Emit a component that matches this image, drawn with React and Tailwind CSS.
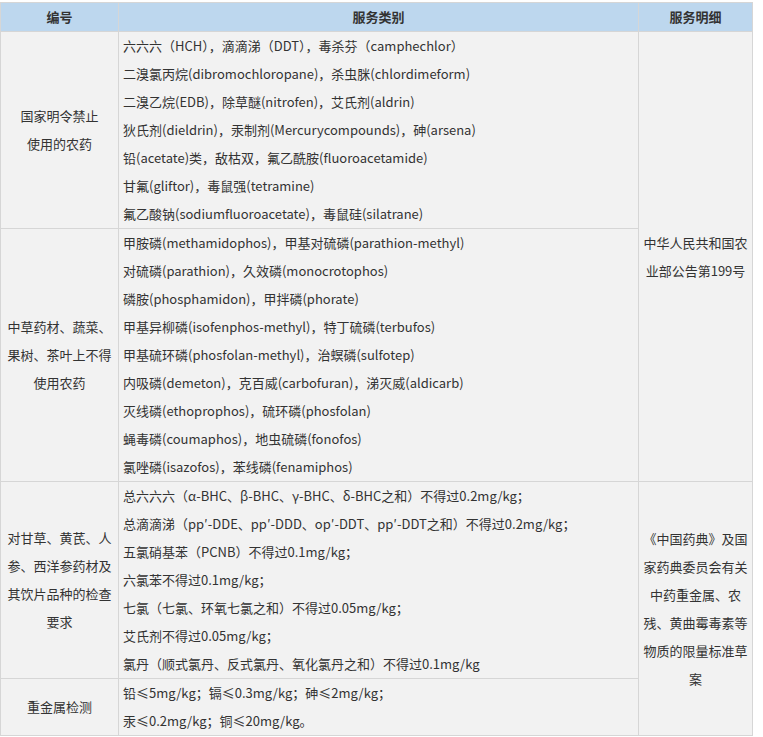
const rows = [
  {
    name: ['国家明令禁止', '使用的农药'],
    lines: [
      '六六六（HCH），滴滴涕（DDT），毒杀芬（camphechlor）',
      '二溴氯丙烷(dibromochloropane)，杀虫脒(chlordimeform)',
      '二溴乙烷(EDB)，除草醚(nitrofen)，艾氏剂(aldrin)',
      '狄氏剂(dieldrin)，汞制剂(Mercurycompounds)，砷(arsena)',
      '铅(acetate)类，敌枯双，氟乙酰胺(fluoroacetamide)',
      '甘氟(gliftor)，毒鼠强(tetramine)',
      '氟乙酸钠(sodiumfluoroacetate)，毒鼠硅(silatrane)',
    ],
    detail: '中华人民共和国农业部公告第199号',
    span: 2,
  },
  {
    name: ['中草药材、蔬菜、', '果树、茶叶上不得', '使用农药'],
    lines: [
      '甲胺磷(methamidophos)，甲基对硫磷(parathion-methyl)',
      '对硫磷(parathion)，久效磷(monocrotophos)',
      '磷胺(phosphamidon)，甲拌磷(phorate)',
      '甲基异柳磷(isofenphos-methyl)，特丁硫磷(terbufos)',
      '甲基硫环磷(phosfolan-methyl)，治螟磷(sulfotep)',
      '内吸磷(demeton)，克百威(carbofuran)，涕灭威(aldicarb)',
      '灭线磷(ethoprophos)，硫环磷(phosfolan)',
      '蝇毒磷(coumaphos)，地虫硫磷(fonofos)',
      '氯唑磷(isazofos)，苯线磷(fenamiphos)',
    ],
  },
  {
    name: ['对甘草、黄芪、人', '参、西洋参药材及', '其饮片品种的检查', '要求'],
    lines: [
      '总六六六（α-BHC、β-BHC、γ-BHC、δ-BHC之和）不得过0.2mg/kg；',
      '总滴滴涕（pp′-DDE、pp′-DDD、op′-DDT、pp′-DDT之和）不得过0.2mg/kg；',
      '五氯硝基苯（PCNB）不得过0.1mg/kg；',
      '六氯苯不得过0.1mg/kg；',
      '七氯（七氯、环氧七氯之和）不得过0.05mg/kg；',
      '艾氏剂不得过0.05mg/kg；',
      '氯丹（顺式氯丹、反式氯丹、氧化氯丹之和）不得过0.1mg/kg',
    ],
    detail: '《中国药典》及国家药典委员会有关中药重金属、农残、黄曲霉毒素等物质的限量标准草案',
    span: 2,
  },
  {
    name: ['重金属检测'],
    lines: ['铅≤5mg/kg；镉≤0.3mg/kg；砷≤2mg/kg；', '汞≤0.2mg/kg；铜≤20mg/kg。'],
  },
];

const cell = 'border border-[#d6d6d6] align-middle';

export default function App() {
  return (
    <div className="w-[763px] h-[737px] bg-white pt-[2px] text-[13px] leading-[28px] text-[#333]" style={{ fontFamily: '"Microsoft YaHei", "Noto Sans CJK SC", sans-serif' }}>
      <table className="w-[752px] border-collapse table-fixed bg-[#f2f2f2]">
        <colgroup>
          <col className="w-[118px]" />
          <col className="w-[520px]" />
          <col className="w-[114px]" />
        </colgroup>
        <thead>
          <tr className="h-[29px] bg-[#bdd7ee] font-bold text-[#333]">
            <th className={cell}>编号</th>
            <th className={cell}>服务类别</th>
            <th className={cell}>服务明细</th>
          </tr>
        </thead>
        <tbody>
          {rows.map((r) => (
            <tr key={r.name.join('')}>
              <td className={`${cell} text-center px-0`}>
                {r.name.map((n) => (
                  <div key={n} className="whitespace-nowrap">{n}</div>
                ))}
              </td>
              <td className={`${cell} px-[4px]`}>
                {r.lines.map((l) => (
                  <div key={l} className="whitespace-nowrap">{l}</div>
                ))}
              </td>
              {r.detail && (
                <td rowSpan={r.span} className={`${cell} text-center px-0`}>{r.detail}</td>
              )}
            </tr>
          ))}
        </tbody>
      </table>
    </div>
  );
}
